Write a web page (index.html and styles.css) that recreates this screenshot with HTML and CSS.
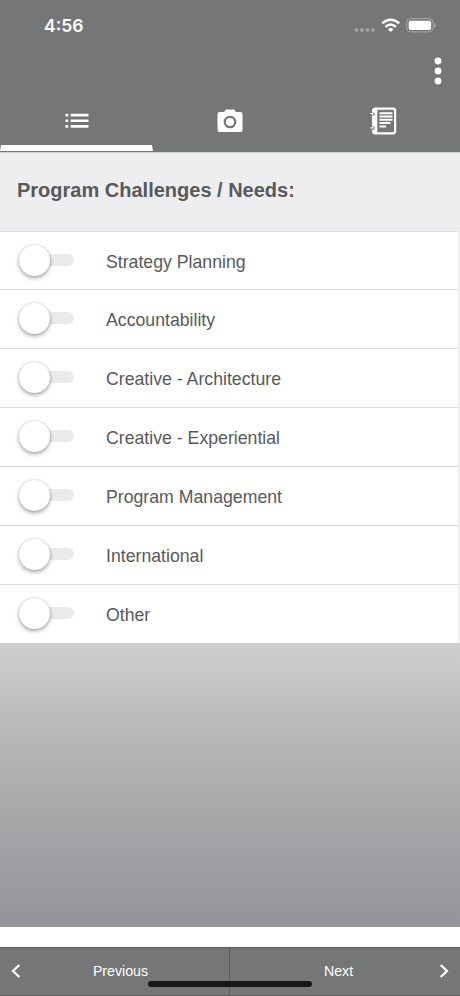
FILE: index.html
```
<!DOCTYPE html>
<html lang="en">
<head>
  <meta charset="UTF-8" />
  <meta name="viewport" content="width=device-width, initial-scale=1.0, viewport-fit=cover" />
  <title>Program Challenges</title>
  <link rel="stylesheet" href="styles.css">
</head>
<body>
  <header class="header">
    <div class="status-bar">
      <span class="time">4:56</span>
      <!-- signal, wifi, battery -->
      <svg class="status-icons" width="84" height="18" viewBox="0 0 84 18">
        <g fill="#a0a1a2">
          <circle cx="4.5" cy="13" r="2" /><circle cx="10" cy="13" r="2" />
          <circle cx="15.5" cy="13" r="2" /><circle cx="21" cy="13" r="2" />
        </g>
        <g fill="none" stroke="#fff" stroke-width="2.5">
          <path d="M30.2 6.4Q38.7 -1 47.2 6.4" />
          <path d="M33.5 9.9Q38.7 5.2 43.9 9.9" />
        </g>
        <path d="M36 12.2Q38.7 9.8 41.4 12.2L38.7 15Z" fill="#fff" />
        <rect x="54.7" y="1.7" width="26.5" height="13.2" rx="4" fill="none" stroke="#a8a9aa" />
        <rect x="56.7" y="3.7" width="22.5" height="9.2" rx="2" fill="#fff" />
        <path d="M82.3 6v4.8q1.5-.5 1.5-2.4T82.3 6z" fill="#a8a9aa" />
      </svg>
    </div>
    <div class="toolbar">
      <svg width="8" height="28" viewBox="0 0 8 28" fill="#fff">
        <circle cx="4" cy="4" r="3.4" /><circle cx="4" cy="14" r="3.4" /><circle cx="4" cy="24" r="3.4" />
      </svg>
    </div>
    <nav class="tabs">
      <div class="tab active">
        <svg width="24" height="16" viewBox="0 0 24 16" fill="#fff">
          <path d="M.5 .7h2.7v2.7H.5zM5.7 .7h17.8v2.7H5.7zM.5 6.4h2.7v2.7H.5zM5.7 6.4h17.8v2.7H5.7zM.5 12h2.7v2.7H.5zM5.7 12h17.8v2.7H5.7z" />
        </svg>
      </div>
      <div class="tab">
        <svg width="26" height="24" viewBox="0 0 26 24">
          <path d="M2.8 3H7l2-2.4h8L19 3h4.2q2.3 0 2.3 2.3v15.4q0 2.3-2.3 2.3H2.8Q.5 23 .5 20.7V5.3Q.5 3 2.8 3z" fill="#fff" />
          <circle cx="13" cy="13" r="5.2" fill="none" stroke="#757678" stroke-width="2.3" />
        </svg>
      </div>
      <div class="tab">
        <svg width="28" height="28" viewBox="0 0 28 28">
          <rect x="4.2" y="1.7" width="21.9" height="24.6" rx="2" fill="none" stroke="#fff" stroke-width="2.2" />
          <path d="M3.5 2h4.8v24H3.5z" fill="#fff" />
          <path d="M10.5 6.2h13M10.5 9.5h13M10.5 12.8h13M10.5 16.1h11M10.5 19.4h6.5" stroke="#fff" stroke-width="2" />
          <g stroke-linecap="round" fill="none">
            <path d="M2.5 7.2h1.7M2.5 21.2h1.7" stroke="#757678" stroke-width="3.2" />
            <path d="M1.7 6.5h1.7q1.2 .7 0 1.4M1.7 20.9h2.4" stroke="#fff" stroke-width="1.2" />
          </g>
        </svg>
      </div>
    </nav>
  </header>

  <main class="content">
    <h1 class="title">Program Challenges / Needs:</h1>
    <ul class="list">
      <li class="item"><span class="toggle"></span><span class="label">Strategy Planning</span></li>
      <li class="item"><span class="toggle"></span><span class="label">Accountability</span></li>
      <li class="item"><span class="toggle"></span><span class="label">Creative - Architecture</span></li>
      <li class="item"><span class="toggle"></span><span class="label">Creative - Experiential</span></li>
      <li class="item"><span class="toggle"></span><span class="label">Program Management</span></li>
      <li class="item"><span class="toggle"></span><span class="label">International</span></li>
      <li class="item"><span class="toggle"></span><span class="label">Other</span></li>
    </ul>
    <div class="backdrop"></div>
  </main>

  <footer class="footer">
    <div class="nav-btn prev">
      <svg width="10" height="14" viewBox="0 0 10 14"><path d="M8.3 1L2 7l6.3 6" /></svg>
      <span>Previous</span>
    </div>
    <div class="nav-btn next">
      <span>Next</span>
      <svg width="10" height="14" viewBox="0 0 10 14"><path d="M1.7 1L8 7l-6.3 6" /></svg>
    </div>
    <div class="home-bar"></div>
  </footer>
</body>
</html>
```
FILE: styles.css
```
:root {
  --bar: #757678;
  --text: #58595b;
}
* { box-sizing:border-box; }
html, body { margin:0; padding:0; height:100%; }
body {
  display:flex;
  flex-direction:column;
  height:996px;
  background:#fff;
  font-family:"Liberation Sans", Arial, sans-serif;
  color:var(--text);
  overflow:hidden;
}
svg { display:block; flex:none; }
/* Header */
.header {
  height:153px;
  flex:none;
  background:var(--bar);
  border-bottom:1px solid #d0d0d2;
}
.status-bar {
  height:50px;
  display:flex;
  justify-content:space-between;
  align-items:center;
  padding:2px 24px 0 44px;
}
.time {
  color:#fff;
  font-family:Inter, sans-serif;
  font-size:17.5px;
  font-weight:600;
  padding-bottom:2px;
}
.toolbar {
  height:42px;
  display:flex;
  justify-content:flex-end;
  align-items:center;
  padding-right:18px;
}
.tabs {
  height:59px;
  display:grid;
  grid-template-columns:repeat(3, 1fr);
}
.tab {
  display:flex;
  justify-content:center;
  align-items:center;
  padding-top:4px;
  border-bottom:6px solid transparent;
  border-left:1px solid transparent;
  border-right:1px solid transparent;
}
.tab.active { border-bottom-color:#fff; }
/* Challenge list */
.content {
  flex:none;
  height:774px;
  display:flex;
  flex-direction:column;
}
.title {
  margin:0;
  height:77.6px;
  flex:none;
  padding:0 17px;
  background:#eeeef0;
  font-size:20px;
  line-height:74px;
  font-weight:bold;
  white-space:nowrap;
}
.list {
  margin:0;
  padding:0;
  list-style:none;
  border-right:2px solid #eeeef0;
}
.item {
  height:58.9px;
  display:flex;
  align-items:center;
  padding:0 0 1px 17.5px;
  border-top:1px solid #dcdcde;
}
/* thumb sits over the left end of the track */
.toggle {
  position:relative;
  width:56px;
  height:12px;
  margin:0 32.5px 1px 0;
  border-radius:6px;
  background:linear-gradient(to right, transparent 16px, #ebebeb 16px);
}
.toggle::before {
  content:"";
  position:absolute;
  left:1px;
  top:-9px;
  width:31px;
  height:31px;
  border-radius:50%;
  background:#fff;
  box-shadow:0 2px 4px rgba(0,0,0,0.35), 0 0 2px rgba(0,0,0,0.18);
}
.label {
  font-size:17.7px;
  line-height:22px;
  padding-top:3px;
}
.backdrop {
  flex:1;
  background:linear-gradient(#cfcfd1, #b5b7b8 33%, #a3a4a6 67%, #949598);
}
/* Footer */
.footer {
  position:relative;
  height:49px;
  margin-top:20px;
  flex:none;
  display:grid;
  grid-template-columns:1fr 1fr;
  background:var(--bar);
  border-top:1px solid #5c5a5d;
  border-bottom:1px solid #5c5a5d;
}
.nav-btn {
  display:flex;
  align-items:center;
  padding-bottom:2px;
  color:#fff;
  font-size:14.2px;
}
.nav-btn span { flex:1; text-align:center; padding-top:1px; }
.nav-btn path { fill:none; stroke:#fff; stroke-width:2.2; }
.prev { padding-left:11px; padding-right:9px; border-right:1px solid #5c5a5d; }
.next { padding-left:8px; padding-right:11px; }
.home-bar {
  position:absolute;
  left:148px;
  bottom:8px;
  width:164px;
  height:6px;
  border-radius:3px;
  background:#171719;
}
```
